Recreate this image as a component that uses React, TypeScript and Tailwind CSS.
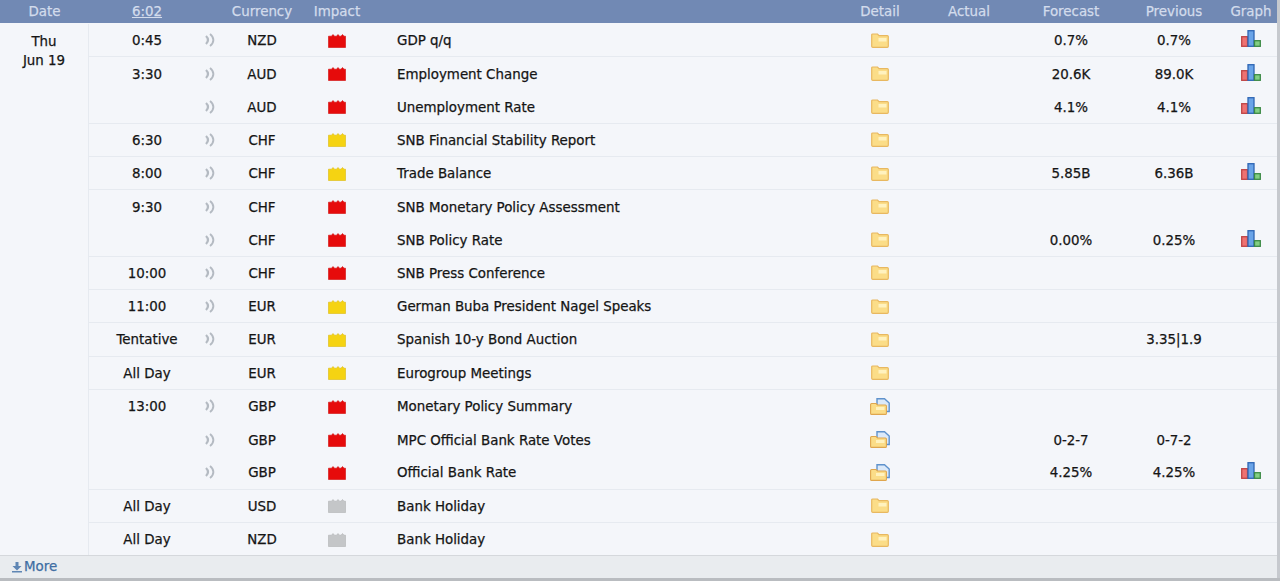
import React from 'react';

type Impact = 'red' | 'yellow' | 'gray';

interface Row {
  time?: string;
  cur: string;
  impact: Impact;
  name: string;
  sound?: boolean;
  blueFolder?: boolean;
  forecast?: string;
  previous?: string;
  graph?: boolean;
  last?: boolean;
}

const rows: Row[] = [
  { time: '0:45', cur: 'NZD', impact: 'red', name: 'GDP q/q', forecast: '0.7%', previous: '0.7%', graph: true, last: true },
  { time: '3:30', cur: 'AUD', impact: 'red', name: 'Employment Change', forecast: '20.6K', previous: '89.0K', graph: true },
  { cur: 'AUD', impact: 'red', name: 'Unemployment Rate', forecast: '4.1%', previous: '4.1%', graph: true, last: true },
  { time: '6:30', cur: 'CHF', impact: 'yellow', name: 'SNB Financial Stability Report', last: true },
  { time: '8:00', cur: 'CHF', impact: 'yellow', name: 'Trade Balance', forecast: '5.85B', previous: '6.36B', graph: true, last: true },
  { time: '9:30', cur: 'CHF', impact: 'red', name: 'SNB Monetary Policy Assessment' },
  { cur: 'CHF', impact: 'red', name: 'SNB Policy Rate', forecast: '0.00%', previous: '0.25%', graph: true, last: true },
  { time: '10:00', cur: 'CHF', impact: 'red', name: 'SNB Press Conference', last: true },
  { time: '11:00', cur: 'EUR', impact: 'yellow', name: 'German Buba President Nagel Speaks', last: true },
  { time: 'Tentative', cur: 'EUR', impact: 'yellow', name: 'Spanish 10-y Bond Auction', previous: '3.35|1.9', last: true },
  { time: 'All Day', cur: 'EUR', impact: 'yellow', name: 'Eurogroup Meetings', sound: false, last: true },
  { time: '13:00', cur: 'GBP', impact: 'red', name: 'Monetary Policy Summary', blueFolder: true },
  { cur: 'GBP', impact: 'red', name: 'MPC Official Bank Rate Votes', blueFolder: true, forecast: '0-2-7', previous: '0-7-2' },
  { cur: 'GBP', impact: 'red', name: 'Official Bank Rate', blueFolder: true, forecast: '4.25%', previous: '4.25%', graph: true, last: true },
  { time: 'All Day', cur: 'USD', impact: 'gray', name: 'Bank Holiday', sound: false, last: true },
  { time: 'All Day', cur: 'NZD', impact: 'gray', name: 'Bank Holiday', sound: false },
];

const impactColor = { red: '#e60b0b', yellow: '#f5d312', gray: '#c4c6c8' };
const impactEdge = { red: '#d00808', yellow: '#dcb80e', gray: '#b0b2b4' };

function ImpactIcon({ level }: { level: Impact }) {
  return (
    <svg width="18" height="15" viewBox="0 0 18 15">
      <path
        d="M.5 14.500V3.200h3L5 1.500l1.500 1.700h2L10 1.500l1.500 1.700h1.500l1.500-1.700 1.500 1.700h1.500v11.300z"
        fill={impactColor[level]}
        stroke={impactEdge[level]}
        strokeWidth="0.6"
      />
    </svg>
  );
}

function SoundIcon() {
  return (
    <svg width="10" height="14" viewBox="0 0 10 14" fill="none" stroke="#b4bac2" strokeWidth="2.200">
      <path d="M1 3c2.500 2.500 2.500 5.500 0 8" />
      <path d="M5 1c4.500 3.500 4.500 8.500 0 12" strokeWidth="1.900" />
    </svg>
  );
}

function FolderIcon({ blue }: { blue?: boolean }) {
  if (blue) {
    return (
      <svg width="20" height="17" viewBox="0 0 20 17">
        <path d="M7 .8h7.500L19.200 5v8.500H7z" fill="#dbe9f9" stroke="#5f92cc" strokeWidth="1.400" />
        <path
          d="M.6 6.500a1 1 0 0 1 1-1h4.400l1.500 1.500h7.900a1 1 0 0 1 1 1v7.400a1 1 0 0 1-1 1H1.600a1 1 0 0 1-1-1z"
          fill="#fbdd88"
          stroke="#dfa64e"
          strokeWidth="1.100"
        />
        <rect x="6" y="9" width="8.500" height="3" fill="#fff2bf" />
      </svg>
    );
  }
  return (
    <svg width="18" height="15" viewBox="0 0 18 15">
      <path
        d="M.7 2a1 1 0 0 1 1-1h4.800l1.500 1.600h8.300a1 1 0 0 1 1 1v9.700a1 1 0 0 1-1 1H1.700a1 1 0 0 1-1-1z"
        fill="#fbdd88"
        stroke="#e8b860"
        strokeWidth="1.200"
      />
      <rect x="7.500" y="5" width="8" height="3.500" fill="#fff2bf" />
    </svg>
  );
}

function GraphIcon() {
  return (
    <svg className="mb-[3px]" width="20" height="17" viewBox="0 0 20 17">
      <rect x=".7" y="6.700" width="5.800" height="9.600" fill="#ee7272" stroke="#bf4444" strokeWidth="1.300" />
      <rect x="7" y=".7" width="6" height="15.600" fill="#6aa4e8" stroke="#2e66b4" strokeWidth="1.300" />
      <rect x="13.500" y="10.700" width="5.800" height="5.600" fill="#83cf83" stroke="#3c8a46" strokeWidth="1.300" />
    </svg>
  );
}

function EventRow({ row }: { row: Row }) {
  return (
    <div className={`flex h-[33.25px] items-center pl-[15px] ${row.last ? 'border-b border-[#e6eaf0]' : ''}`}>
      <div className="w-[86px] pt-[2px] text-center">{row.time}</div>
      <div className="flex w-[40px] justify-center">{row.sound !== false && <SoundIcon />}</div>
      <div className="w-[64px] pt-[2px] text-center">{row.cur}</div>
      <div className="flex w-[86px] justify-center"><ImpactIcon level={row.impact} /></div>
      <div className="w-[462px] pl-[17px] pt-[2px]">{row.name}</div>
      <div className="flex w-[76px] justify-center"><FolderIcon blue={row.blueFolder} /></div>
      <div className="w-[102px]" />
      <div className="w-[102px] pt-[2px] text-center">{row.forecast}</div>
      <div className="w-[104px] pt-[2px] text-center">{row.previous}</div>
      <div className="flex w-[50px] justify-center">{row.graph && <GraphIcon />}</div>
    </div>
  );
}

export default function App() {
  return (
    <div className="h-[581px] w-[1280px] overflow-hidden bg-white text-[13.4px] text-[#151515] [-webkit-text-stroke:0.25px] [font-family:'DejaVu_Sans',sans-serif]">
      <div className="flex h-[578px] flex-col border-r-[3px] border-[#c6c9ce]">
        <div className="flex h-[23px] shrink-0 items-center bg-[#7189b4] pt-[2px] text-[#d3dcec]">
          <div className="w-[89px] text-center">Date</div>
          <div className="w-[15px]" />
          <div className="w-[86px] text-center underline">6:02</div>
          <div className="w-[40px]" />
          <div className="w-[64px] text-center">Currency</div>
          <div className="w-[86px] text-center">Impact</div>
          <div className="w-[462px]" />
          <div className="w-[76px] text-center">Detail</div>
          <div className="w-[102px] text-center">Actual</div>
          <div className="w-[102px] text-center">Forecast</div>
          <div className="w-[104px] text-center">Previous</div>
          <div className="w-[50px] text-center">Graph</div>
        </div>
        <div className="flex min-h-0 flex-1 bg-[#f4f6fa] pt-px">
          <div className="w-[89px] shrink-0 border-r border-[#e6eaf0] pt-[8px] text-center leading-[19px]">
            <div>Thu</div>
            <div>Jun 19</div>
          </div>
          <div className="min-w-0 flex-1">
            {rows.map((row, i) => (
              <EventRow key={i} row={row} />
            ))}
          </div>
        </div>
        <div className="flex h-[23px] shrink-0 items-center gap-[2px] border-t border-[#d5d8dc] bg-[#e9ecef] pl-[12px] text-[#3f6ea3]">
          <svg width="10" height="12" viewBox="0 0 10 12" fill="#5f86b4">
            <path d="M3.500 1h3v4h3L5 9.500.5 5h3zM0 10h10v1.500H0z" />
          </svg>
          More
        </div>
      </div>
      <div className="h-[3px] bg-[#b9bcc0]" />
    </div>
  );
}
